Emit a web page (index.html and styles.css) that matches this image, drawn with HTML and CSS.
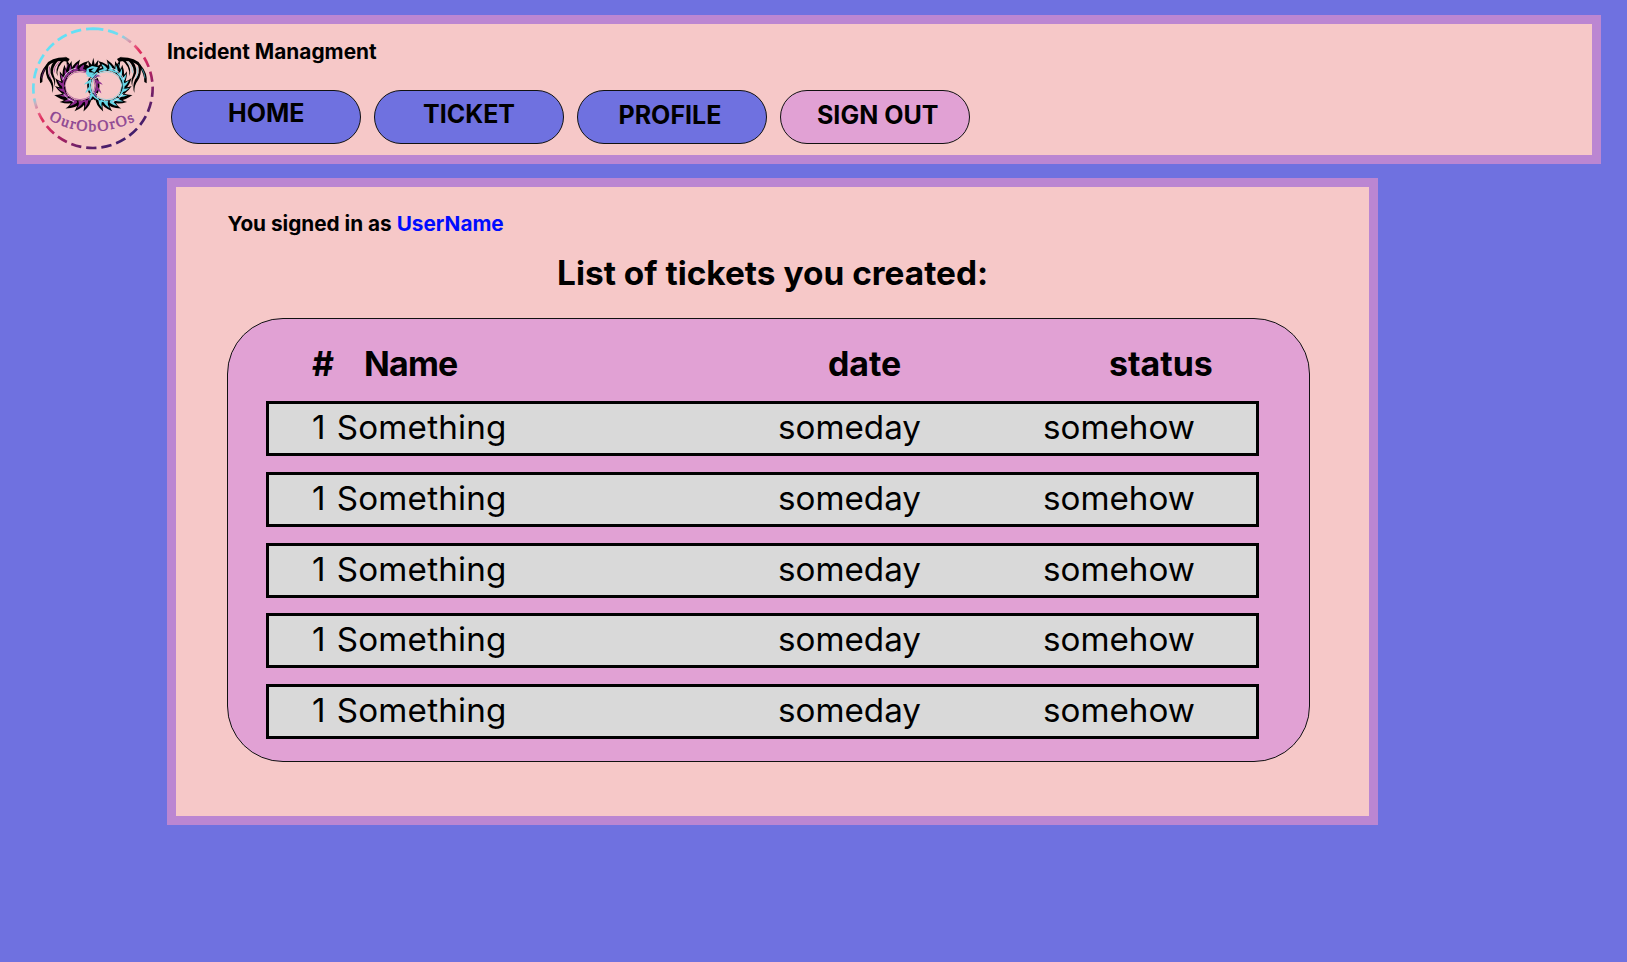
FILE: index.html
```html
<!DOCTYPE html>
<html lang="en">
<head>
<meta charset="utf-8">
<title>Incident Managment</title>
<link rel="stylesheet" href="styles.css">
</head>
<body>
<header class="topbar">
  <svg class="logo" viewBox="60 45 378 378" aria-label="OurObOrOs">
    <defs>
      <linearGradient id="ring" gradientUnits="userSpaceOnUse" x1="145" y1="87" x2="353" y2="383">
        <stop offset="0" stop-color="#62e0f6"/>
        <stop offset=".28" stop-color="#6fdcf0"/>
        <stop offset=".33" stop-color="#c9b0bf"/>
        <stop offset=".4" stop-color="#e8668a"/>
        <stop offset=".46" stop-color="#e0305f"/>
        <stop offset=".58" stop-color="#c92a64"/>
        <stop offset=".7" stop-color="#a02063"/>
        <stop offset=".83" stop-color="#6b2068"/>
        <stop offset="1" stop-color="#3f1d6b"/>
      </linearGradient>
      <path id="spike" d="M-20 -46 Q-16 -64 14 -77 Q4 -61 6 -46 Z"/>
      <path id="scale" d="M-11 -48 Q-7 -60 7 -68 Q0 -57 1 -48 Z"/>
      <g id="spikes">
        <use href="#spike" transform="rotate(-178)"/><use href="#spike" transform="rotate(-158) scale(1.04)"/>
        <use href="#spike" transform="rotate(-139)"/><use href="#spike" transform="rotate(-120) scale(1.05)"/>
        <use href="#spike" transform="rotate(-101) scale(.96)"/><use href="#spike" transform="rotate(-83)"/>
        <use href="#spike" transform="rotate(-65) scale(.95)"/><use href="#spike" transform="rotate(-47)"/>
        <use href="#spike" transform="rotate(-29)"/><use href="#spike" transform="rotate(-10)"/>
        <use href="#spike" transform="rotate(9)"/><use href="#spike" transform="rotate(162)"/>
      </g>
      <g id="scales">
        <use href="#scale" transform="rotate(-178)"/><use href="#scale" transform="rotate(-158)"/>
        <use href="#scale" transform="rotate(-139)"/><use href="#scale" transform="rotate(-120)"/>
        <use href="#scale" transform="rotate(-101)"/><use href="#scale" transform="rotate(-83)"/>
        <use href="#scale" transform="rotate(-65)"/><use href="#scale" transform="rotate(-47)"/>
        <use href="#scale" transform="rotate(-29)"/><use href="#scale" transform="rotate(-10)"/>
        <use href="#scale" transform="rotate(9)"/><use href="#scale" transform="rotate(162)"/>
        <use href="#scale" transform="rotate(60)"/><use href="#scale" transform="rotate(82)"/>
        <use href="#scale" transform="rotate(104)"/><use href="#scale" transform="rotate(126)"/>
      </g>
      <g id="dragon">
        <path fill="#000" d="M90 220 Q86 190 108 165 Q122 141 170 142 L157 135 L179 147 L174 155 Q136 148 114 168 Q96 192 97 216Z"/>
        <path fill="#000" d="M108 164 Q104 196 118 214 Q128 226 127 249 Q134 228 125 209 Q108 190 116 164Z"/>
        <path fill="#000" d="M134 151 Q113 178 126 200 Q134 210 133 230 Q139 212 131 196 Q122 176 146 150Z"/>
        <path fill="#000" d="M166 149 Q137 170 143 199 Q132 178 154 151Z M169 149 L183 168 L166 200 L159 190 L171 172Z"/>
        <path fill="none" stroke="currentColor" stroke-width="2" d="M104 176 Q96 190 95 205 M122 205 Q113 190 119 170 M148 155 Q131 170 132 188 M174 162 L164 190"/>
        <g transform="translate(210 227)">
          <use href="#spikes" fill="#000"/>
          <ellipse rx="53" ry="50" fill="none" stroke="#000" stroke-width="11" stroke-dasharray="22 3"/>
          <ellipse rx="51" ry="48" fill="none" stroke="currentColor" stroke-width="5" stroke-dasharray="24 5"/>
          <use href="#scales" fill="currentColor"/>
          <path fill="none" stroke="#f3dff5" stroke-width="2.5" d="M-52 -18 Q-42 -45 -12 -53 M-50 24 Q-38 42 -18 49"/>
          <ellipse rx="45" ry="42" fill="none" stroke="currentColor" stroke-opacity=".6" stroke-width="3"/>
        </g>
      </g>
      <path id="arc" d="M116 328 Q249 401 394 324"/>
    </defs>
    <path d="M249 56 A179 179 0 0 1 249 414 A179 179 0 0 1 249 56" pathLength="360" fill="none" stroke="url(#ring)" stroke-width="8" stroke-dasharray="10 4.7"/>
    <use href="#dragon" class="dragon-purple"/>
    <use href="#dragon" class="dragon-cyan" transform="translate(500 0) scale(-1 1)"/>
    <path fill="#000" d="M228 182 L220 160 L237 168 L234 151 L245 164 L250 143 L254 164 L265 149 L263 168 L278 158 L264 184 L249 193Z"/>
    <path class="dragon-cyan" fill="currentColor" d="M230 176 L246 168 L264 172 L254 188 L238 202 L228 192Z"/>
    <path fill="#000" d="M236 178 L252 175 L243 182 L256 188 L238 187Z"/>
    <text class="logo-text"><textPath href="#arc" textLength="270">OurObOrOs</textPath></text>
  </svg>
  <div class="topbar-main">
    <h1 class="brand">Incident Managment</h1>
    <nav class="nav">
      <a class="pill pill-home">HOME</a>
      <a class="pill pill-ticket">TICKET</a>
      <a class="pill pill-profile">PROFILE</a>
      <a class="pill pill-out">SIGN OUT</a>
    </nav>
  </div>
</header>
<main class="content">
  <p class="signed">You signed in as <span class="user">UserName</span></p>
  <h2 class="title">List of tickets you created:</h2>
  <section class="panel">
    <div class="head"><span>#</span><span class="head-name">Name</span><span>date</span><span>status</span></div>
    <div class="rows">
      <div class="row"><span class="row-name">1 Something</span><span>someday</span><span>somehow</span></div>
      <div class="row"><span class="row-name">1 Something</span><span>someday</span><span>somehow</span></div>
      <div class="row"><span class="row-name">1 Something</span><span>someday</span><span>somehow</span></div>
      <div class="row"><span class="row-name">1 Something</span><span>someday</span><span>somehow</span></div>
      <div class="row"><span class="row-name">1 Something</span><span>someday</span><span>somehow</span></div>
    </div>
  </section>
</main>
</body>
</html>
```
FILE: styles.css
```css
* { box-sizing: border-box; }
body {
  margin: 0;
  padding: 15px 26px 0 17px;
  min-height: 962px;
  background: #6f71e0;
  font-family: Inter, sans-serif;
  color: #000;
}
h1, h2, p { margin: 0; }
.topbar {
  display: flex;
  height: 149px;
  border: 9px solid #bb86d2;
  background: #f6c8c8;
}
.logo { flex: none; width: 126px; height: 126px; margin: 1px 0 0 4px; }
.logo-text {
  font: 46px "Liberation Serif", serif;
  fill: #8d4592;
  stroke: #8d4592;
  stroke-width: 1.5;
}
.dragon-purple { color: #8c2a8e; }
.dragon-cyan { color: #67d5e6; }
.topbar-main { margin-left: 11px; padding-top: 15px; }
.brand { font-size: 20.85px; line-height: 26px; font-weight: 700; white-space: nowrap; }
.nav { display: flex; gap: 13px; margin: 25px 0 0 4px; }
.pill {
  width: 190px;
  height: 54px;
  border: 1px solid #111;
  border-radius: 27px;
  background: #6f71e0;
  font-size: 25px;
  line-height: 30px;
  font-weight: 700;
  white-space: nowrap;
}
.pill-home { padding: 7px 0 0 56px; }
.pill-ticket { padding: 8px 0 0 48px; }
.pill-profile { padding: 9px 0 0 40.5px; }
.pill-out { padding: 9px 0 0 36px; background: #e1a1d4; }
.content {
  width: 1211px;
  height: 647px;
  margin: 14px 0 0 150px;
  padding: 24px 0 0 51px;
  border: 9px solid #bb86d2;
  background: #f6c8c8;
}
.signed { padding-left: 0.5px; font-size: 20.75px; line-height: 26px; font-weight: 700; }
.user { color: #000cff; }
.title { margin: 16px 0 0 330px; font-size: 33.4px; line-height: 40px; font-weight: 700; white-space: nowrap; }
.panel {
  width: 1083px;
  height: 444px;
  margin-top: 25px;
  padding: 25px 0 0 38px;
  border: 1px solid #111;
  border-radius: 56px;
  background: #e1a1d4;
}
.head {
  display: grid;
  grid-template-columns: 52px 464px 281px auto;
  padding-left: 46px;
  font-size: 33.9px;
  line-height: 40px;
  font-weight: 700;
}
.head-name { letter-spacing: -0.8px; }
.rows { display: flex; flex-direction: column; gap: 15.75px; margin-top: 17px; }
.row {
  display: grid;
  grid-template-columns: 466px 265px auto;
  width: 993px;
  height: 55px;
  padding: 3px 0 0 43px;
  border: 3px solid #000;
  background: #d9d9d9;
  font-size: 33.2px;
  font-weight: 380;
  line-height: 40px;
}
.row-name { letter-spacing: 0.2px; word-spacing: 1.5px; }
```
